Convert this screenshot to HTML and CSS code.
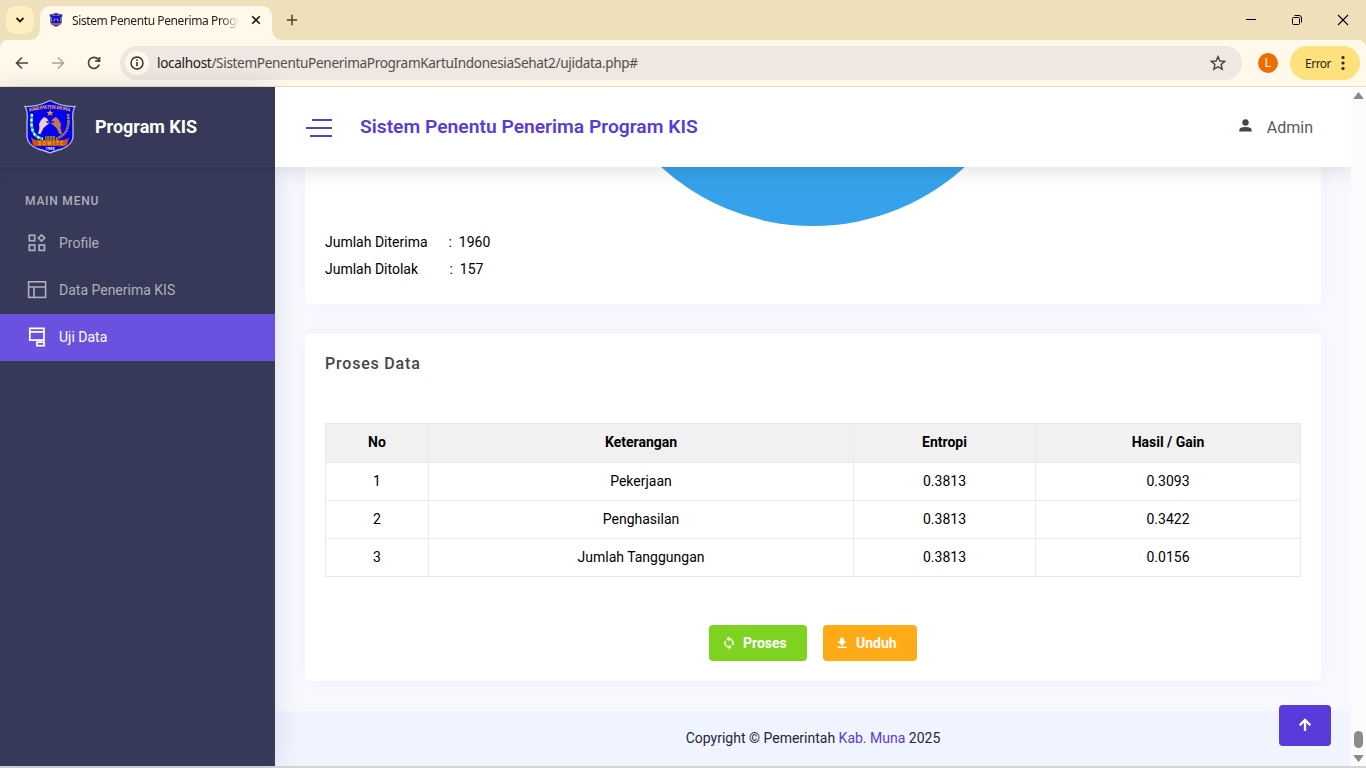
FILE: index.html
```html
<!DOCTYPE html>
<html lang="id">
<head>
<meta charset="utf-8">
<title>Sistem Penentu Penerima Program KIS</title>
<link rel="stylesheet" href="styles.css">
</head>
<body>
<div class="browser">
  <div class="tabstrip">
    <div class="tab-search"><svg width="10" height="10" viewBox="0 0 10 10"><path d="M1.500 3L5 6.500L8.500 3" fill="none" stroke="#1f1d12" stroke-width="1.800"/></svg></div>
    <div class="tab">
      <svg class="favicon" width="16" height="16" viewBox="0 0 16 16">
        <path d="M8 1Q5 2.700 1.800 2.500L2.500 6V10.500Q3 13 8 14.500Q13 13 13.500 10.500V6L14.200 2.500Q11 2.700 8 1Z" fill="#0d08dd" stroke="#7773a8" stroke-width=".8"/>
        <path d="M4 3.800Q8 2.300 12 3.800" fill="none" stroke="#8a7350" stroke-width="1"/>
        <path d="M5 9L7 5.800L7.500 7L6 9.500ZM11 9L9 5.800L8.500 7L10 9.500Z" fill="#b9a0c8"/>
        <path d="M3.500 5V9.500" stroke="#48a880"/><path d="M12.500 5V9.500" stroke="#81765a"/>
        <path d="M3.200 10.500Q8 12 12.800 10.500L12.200 12.500Q8 13.700 3.800 12.500Z" fill="#c76522"/>
      </svg>
      <span class="tab-title">Sistem Penentu Penerima Program</span>
      <svg class="tab-close" width="10" height="10" viewBox="0 0 10 10"><path d="M1.200 1.200L8.800 8.800M8.800 1.200L1.200 8.800" stroke="#1f1d12" stroke-width="1.600"/></svg>
    </div>
    <svg class="new-tab" width="12" height="12" viewBox="0 0 12 12"><path d="M6 .8V11.200M.8 6H11.200" stroke="#4a452c" stroke-width="1.500"/></svg>
    <div class="window-controls">
      <svg width="12" height="12" viewBox="0 0 12 12"><path d="M1 5.500H11" stroke="#000"/></svg>
      <svg width="12" height="12" viewBox="0 0 12 12" fill="none" stroke="#000"><rect x="1.500" y="3.500" width="7" height="7" rx="1"/><path d="M3.500 1.500H8Q10.500 1.500 10.500 4V8.500"/></svg>
      <svg width="12" height="12" viewBox="0 0 12 12"><path d="M1 1L11 11M11 1L1 11" stroke="#000" stroke-width="1.100"/></svg>
    </div>
  </div>
  <div class="toolbar">
    <svg class="nav-icon" width="14" height="14" viewBox="0 0 14 14" fill="none" stroke="#4a452c" stroke-width="1.600"><path d="M13 7H2M7 1.500L1.500 7L7 12.500"/></svg>
    <svg class="nav-icon" width="14" height="14" viewBox="0 0 14 14" fill="none" stroke="#aaa591" stroke-width="1.500"><path d="M1 7H12M7 1.500L12.500 7L7 12.500"/></svg>
    <svg class="nav-icon" width="14" height="14" viewBox="0 0 14 14" fill="none" stroke="#4a452c" stroke-width="1.700"><path d="M12.200 8.500A5.500 5.500 0 1 1 11 3.200L12.500 5M12.500 1V5.200H8.200"/></svg>
    <div class="omnibox">
      <span class="site-info"><svg width="14" height="14" viewBox="0 0 14 14"><circle cx="7" cy="7" r="6" fill="none" stroke="#2d2922" stroke-width="1.400"/><path d="M7 6V10.200M7 3.600V5" stroke="#2d2922" stroke-width="1.500"/></svg></span>
      <span class="url"><b>localhost</b>/SistemPenentuPenerimaProgramKartuIndonesiaSehat2/ujidata.php#</span>
      <svg class="star" width="16" height="16" viewBox="0 0 16 16"><path d="M8 1.600L9.900 6L14.700 6.400L11.100 9.500L12.200 14.200L8 11.700L3.800 14.200L4.900 9.500L1.300 6.400L6.100 6Z" fill="none" stroke="#4a452c" stroke-width="1.400"/></svg>
    </div>
    <span class="avatar">L</span>
    <div class="error-pill"><span>Error</span><svg width="4" height="16" viewBox="0 0 4 16" fill="#2b270f"><circle cx="2" cy="2.500" r="1.600"/><circle cx="2" cy="8" r="1.600"/><circle cx="2" cy="13.500" r="1.600"/></svg></div>
  </div>
</div>

<div class="page">
  <aside class="sidebar">
    <div class="brand">
      <svg width="52" height="56" viewBox="0 0 52 56">
        <path d="M26 1.500Q13 8 1 7.500Q4 12 3 23V38Q4 46 14 50Q22 52 26 54Q30 52 38 50Q48 46 49 38V23Q48 12 51 7.500Q39 8 26 1.500Z" fill="#0500ee" stroke="#b9bdd5" stroke-width="1.300"/>
        <path id="crest-arc" d="M5.500 12.800Q26 6.500 46.500 12.800" fill="none"/>
        <text class="crest-name"><textPath href="#crest-arc" textLength="41">KABUPATEN MUNA</textPath></text>
        <path d="M26 10.500L27 13H29.500L27.500 14.500L28.500 17L26 15.500L23.500 17L24.500 14.500L22.500 13H25Z" fill="#f0a020"/>
        <path d="M8 15Q6 30 11 36Q14 39 19 40" fill="none" stroke="#38c860" stroke-width="2.600"/>
        <path d="M8 15Q6 30 11 36Q14 39 19 40" fill="none" stroke="#e8fff0" stroke-width="2.400" stroke-dasharray="2 3"/>
        <path d="M44 15Q46 29 40 35Q37 38 32 40" fill="none" stroke="#a18a42" stroke-width="2.600" stroke-dasharray="2 .6"/>
        <path d="M14 35L15.500 29L15 25L17 21L20 18L23 19.500L25 22.500L22 22L23 24L26 23.500L23 26L19.500 29L16.500 35Z" fill="#ead1cf"/>
        <path d="M38 35L36.500 29L37 25L35 21L32 18L29 19.500L27 22.500L30 22L29 24L26 23.500L29 26L32.500 29L35.500 35Z" fill="#ba7953"/>
        <path d="M21 37H31V41H21Z" fill="#8a7a34"/>
        <path d="M22.500 37V41M25.500 37V41M28.500 37V41" stroke="#322480" stroke-width=".7"/>
        <path d="M7 38Q9 41 14 41H38Q43 41 45 38L43 46Q40 48 36 47H16Q11 48 9 46Z" fill="#c7540f"/>
        <text x="14" y="46" textLength="25" class="crest-motto">SOWITE</text>
        <text x="21.500" y="51" textLength="9" class="crest-year">1959</text>
      </svg>
      <span>Program KIS</span>
    </div>
    <nav class="menu">
      <div class="menu-label">MAIN MENU</div>
      <a class="menu-item"><svg width="20" height="20" viewBox="0 0 20 20" fill="none" stroke="currentColor" stroke-width="1.700"><rect x="2.300" y="2.300" width="5.400" height="5.400"/><path d="M14.500 1.900L17.700 5L14.500 8.100L11.400 5Z"/><rect x="2.300" y="12" width="5.400" height="5.400"/><rect x="12.100" y="12" width="5.400" height="5.400"/></svg>Profile</a>
      <a class="menu-item"><svg width="20" height="20" viewBox="0 0 20 20" fill="none" stroke="currentColor" stroke-width="1.600"><rect x="1.600" y="1.800" width="17" height="15.600"/><path d="M1.600 7H18.600M7 7V17.400"/></svg>Data Penerima KIS</a>
      <a class="menu-item active"><svg width="20" height="20" viewBox="0 0 20 20" fill="none" stroke="currentColor" stroke-width="1.700"><path d="M2.800 1.300H17V13.200H2.800ZM2.800 4.800H17"/><rect x="9.900" y="15.200" width="7.300" height="3.500"/></svg>Uji Data</a>
    </nav>
  </aside>
  <div class="content">
    <header class="header">
      <div class="hamburger"><i></i><i></i><i></i></div>
      <h1>Sistem Penentu Penerima Program KIS</h1>
      <div class="user"><svg width="13" height="13" viewBox="0 0 13 13" fill="#42474f"><circle cx="6.500" cy="3.500" r="3.200"/><path d="M.3 12.500V11Q.3 8 6.500 8T12.700 11V12.500Z"/></svg><span>Admin</span></div>
    </header>
    <main class="main">
      <section class="card chart-card">
        <div class="pie"></div>
        <div class="stat"><span>Jumlah Diterima</span><span class="value">:&nbsp; 1960</span></div>
        <div class="stat"><span>Jumlah Ditolak</span><span class="value shifted">:&nbsp; 157</span></div>
      </section>
      <section class="card process-card">
        <h2>Proses Data</h2>
        <table>
          <colgroup><col class="c-no"><col class="c-ket"><col class="c-ent"><col></colgroup>
          <thead><tr><th>No</th><th>Keterangan</th><th>Entropi</th><th>Hasil / Gain</th></tr></thead>
          <tbody>
            <tr><td>1</td><td>Pekerjaan</td><td>0.3813</td><td>0.3093</td></tr>
            <tr><td>2</td><td>Penghasilan</td><td>0.3813</td><td>0.3422</td></tr>
            <tr><td>3</td><td>Jumlah Tanggungan</td><td>0.3813</td><td>0.0156</td></tr>
          </tbody>
        </table>
        <div class="actions">
          <button class="btn green"><svg width="14" height="14" viewBox="0 0 24 24" fill="#fff" stroke="#fff" stroke-width=".5"><path d="M12 18A6 6 0 0 1 6 12C6 11 6.250 10.030 6.700 9.200L5.240 7.740C4.460 8.970 4 10.430 4 12A8 8 0 0 0 12 20V23L16 19L12 15M12 4V1L8 5L12 9V6A6 6 0 0 1 18 12C18 13 17.750 13.970 17.300 14.800L18.760 16.260C19.540 15.030 20 13.570 20 12A8 8 0 0 0 12 4Z"/></svg>Proses</button>
          <button class="btn orange"><svg width="10" height="12" viewBox="0 0 10 12" fill="#fff"><path d="M3.200 .8H6.800V4.200H9.500L5 8.800L.5 4.200H3.200ZM.5 9.500H9.500V11H.5Z"/></svg>Unduh</button>
        </div>
      </section>
      <footer class="footer"><span>Copyright © Pemerintah <a>Kab. Muna</a> 2025</span></footer>
    </main>
    <div class="to-top"><svg width="14" height="14" viewBox="0 0 14 14" fill="none" stroke="#fff" stroke-width="2.300"><path d="M7 13V2M1.700 7.300L7 2L12.300 7.300"/></svg></div>
  </div>
  <div class="scrollbar">
    <svg width="11" height="9" viewBox="0 0 11 9"><path d="M5.500 1.500L10 7.500H1Z" fill="#8b8b8b" stroke="#8b8b8b" stroke-linejoin="round"/></svg>
    <span class="thumb"></span>
    <svg width="11" height="9" viewBox="0 0 11 9"><path d="M5.500 7.500L10 1.500H1Z" fill="#8b8b8b" stroke="#8b8b8b" stroke-linejoin="round"/></svg>
  </div>
</div>
<div class="window-edge"></div>
</body>
</html>
```
FILE: styles.css
```css
* { box-sizing: border-box; }
body { margin: 0; width: 1366px; height: 768px; overflow: hidden; font: 14px Roboto, sans-serif; color: #000; display: flex; flex-direction: column; }
svg { display: block; flex: none; }
.crest-name { font: bold 5px Roboto, sans-serif; fill: #e0ae48; }
.crest-motto { font: bold 5px Roboto, sans-serif; fill: #e6a63a; }
.crest-year { font: bold 4px Roboto, sans-serif; fill: #fff; }

.browser { height: 87px; flex: none; background: #eee0ba; border-bottom: 1px solid #e8dfc8; font-family: "Noto Sans", sans-serif; }
.tabstrip { height: 40px; display: flex; align-items: center; padding-left: 6px; }
.tab-search { width: 28px; height: 28px; border-radius: 10px; background: #ffefc0; display: flex; align-items: center; justify-content: center; }
.tab { position: relative; width: 232px; height: 34px; margin: 6px 0 0 6px; background: #fff9ec; border-radius: 10px 10px 0 0; display: flex; align-items: center; padding: 0 11px 6px 8px; }
.tab::before, .tab::after { content: ""; position: absolute; bottom: 0; width: 10px; height: 10px; }
.tab::before { left: -10px; background: radial-gradient(circle at 0 0, transparent 9.5px, #fff9ec 10px); }
.tab::after { right: -10px; background: radial-gradient(circle at 100% 0, transparent 9.5px, #fff9ec 10px); }
.tab-title { width: 168px; margin-left: 8px; font-size: 12px; letter-spacing: -.4px; white-space: nowrap; overflow: hidden; color: #1f1d12; -webkit-mask-image: linear-gradient(90deg, #000 148px, transparent 167px); mask-image: linear-gradient(90deg, #000 148px, transparent 167px); }
.tab-close { margin-left: auto; }
.new-tab { margin-left: 14px; }
.window-controls { margin-left: auto; display: flex; gap: 34px; padding-right: 17px; }
.toolbar { height: 46px; background: #fff9ec; border-radius: 8px 8px 0 0; display: flex; align-items: center; padding: 0 6px 0 15px; }
.nav-icon { margin-right: 22px; }
.omnibox { width: 1122px; height: 34px; margin-left: -3px; border-radius: 17px; background: #efe7e1; display: flex; align-items: center; padding: 0 16px 0 5px; }
.site-info { width: 24px; height: 24px; border-radius: 50%; background: #fff9ec; display: flex; align-items: center; justify-content: center; }
.url { margin-left: 8px; padding-bottom: 1px; font-size: 13.6px; letter-spacing: -.34px; color: #554f48; white-space: nowrap; }
.url b { font-weight: 400; color: #1f1b16; }
.star { margin-left: auto; }
.avatar { width: 20px; height: 20px; margin-left: 16px; border-radius: 50%; background: #ef6c00; color: #fff; font: 12px/21px Roboto, sans-serif; text-align: center; }
.error-pill { width: 70px; height: 34px; margin-left: 12px; border-radius: 17px; background: #fce17c; display: flex; align-items: center; justify-content: space-between; padding: 0 15px; font-size: 12px; letter-spacing: -.5px; color: #2b270f; }

.page { height: 679px; flex: none; display: flex; background: #f8f9ff; }
.sidebar { width: 275px; background: #363958; position: relative; z-index: 3; box-shadow: 0 0 24px rgba(60, 45, 70, .14); }
.brand { height: 80px; display: flex; align-items: center; gap: 19px; padding-left: 24px; color: #fff; font-size: 18px; font-weight: 700; }
.brand span { padding-bottom: 2px; }
.menu { box-shadow: inset 0 12px 14px -10px rgba(0, 0, 0, .1); padding-top: 22px; }
.menu-label { height: 31px; padding: 4px 25px; font-size: 12px; line-height: 16px; font-weight: 500; letter-spacing: .78px; color: #afb0bc; }
.menu-item { height: 47px; display: flex; align-items: center; gap: 12px; padding: 0 0 2px 27px; color: #afb0bc; }
.menu-item.active { background: #6a51e0; color: #fff; }

.content { width: 1076px; position: relative; display: flex; flex-direction: column; }
.header { height: 80px; flex: none; position: relative; z-index: 4; clip-path: inset(0 0 -30px 0); background: #fff; box-shadow: 0 3px 20px rgba(0, 0, 0, .13); display: flex; align-items: center; padding: 0 38px 0 31px; }
.hamburger { width: 26px; display: flex; flex-direction: column; align-items: flex-end; gap: 6px; margin-top: 1px; }
.hamburger i { width: 20px; height: 2px; background: #593bdb; }
.hamburger i:nth-child(2) { width: 26px; }
.hamburger i:nth-child(3) { width: 22px; }
.header h1 { margin: 0 0 0 28px; padding-bottom: 2px; font-size: 19.25px; font-weight: 600; color: #593bdb; white-space: nowrap; }
.user { margin-left: auto; display: flex; align-items: center; gap: 15px; font-size: 16px; color: #555b66; }
.user svg { margin-bottom: 3px; }
.main { height: 599px; overflow: hidden; display: flex; flex-direction: column; justify-content: flex-end; }
.card { flex: none; margin: 0 30px 30px; background: #fff; border-radius: 4px; box-shadow: 0 0 16px rgba(80, 80, 120, .045); }
.chart-card { padding: 0 20px 21px; }
.pie { width: 450px; height: 450px; margin: 0 auto 3px; border-radius: 50%; background: #36a2eb; }
.stat { display: flex; height: 27px; line-height: 27px; }
.stat span:first-child { width: 123.5px; }
.stat .shifted { margin-left: 1px; }
.process-card { height: 347px; padding: 20px; }
.process-card h2 { margin: 0 0 49px; font-size: 16px; line-height: 20px; font-weight: 500; letter-spacing: .8px; color: #454545; }
table { width: 976px; table-layout: fixed; border-collapse: collapse; text-align: center; }
.c-no { width: 103px; }
.c-ket { width: 425px; }
.c-ent { width: 182px; }
th, td { height: 38px; padding: 0 0 2px; border: 1px solid #eaeaea; }
th { height: 39px; background: #f1f1f1; font-weight: 700; }
.actions { display: flex; justify-content: center; gap: 16px; margin-top: 48px; }
.btn { height: 36px; border: 0; border-radius: 4px; color: #fff; font: 700 14px Roboto, sans-serif; display: flex; align-items: center; }
.green { width: 98px; padding: 0 13px; gap: 7px; background: #7ed321; }
.orange { width: 94px; padding: 0 14px; gap: 9px; background: #ffaa16; }
.footer { height: 55px; flex: none; background: #f0f4ff; display: flex; align-items: center; justify-content: center; padding-bottom: 2px; color: #222834; }
.footer a { color: #593bdb; }
.to-top { position: absolute; right: 20px; bottom: 20px; width: 52px; height: 41px; border-radius: 4px; background: #593bdb; display: flex; align-items: center; justify-content: center; padding-bottom: 2px; }
.scrollbar { width: 15px; background: #fcfcfc; position: relative; z-index: 5; display: flex; flex-direction: column; align-items: center; padding: 4px 0 3px; }
.thumb { width: 9px; height: 17px; border-radius: 5px; background: #8b8b8b; margin: auto 0 6px; }
.window-edge { height: 2px; background: #d5d5d5; }
```
